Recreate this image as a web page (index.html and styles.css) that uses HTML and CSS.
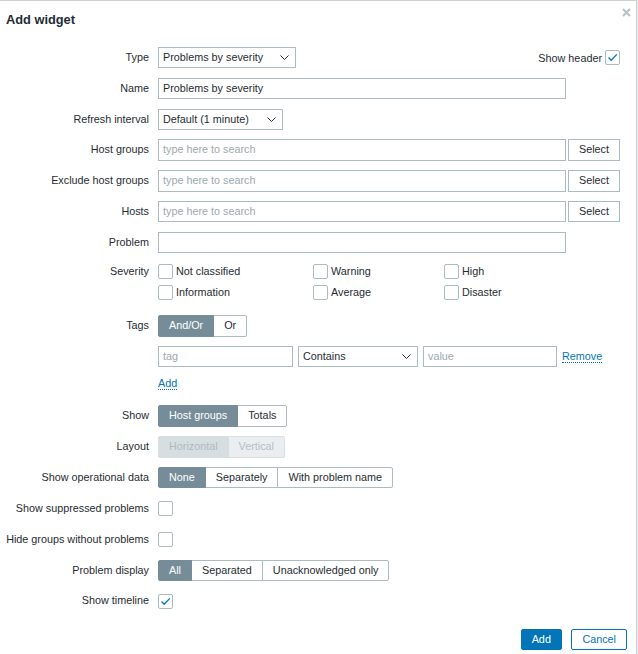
FILE: index.html
```html
<!DOCTYPE html>
<html lang="en">
<head>
<meta charset="utf-8">
<title>Add widget</title>
<link rel="stylesheet" href="styles.css">
</head>
<body>
<div class="dialog">
  <div class="dialog-header">
    <h4 class="title">Add widget</h4>
    <span class="close" title="Close">
      <svg width="9" height="9" viewBox="0 0 9 9"><path d="M1 1L8 8M8 1L1 8" stroke="#b9c3c8" stroke-width="2.2" fill="none"/></svg>
    </span>
  </div>

  <div class="dialog-body">
    <div class="form-grid">
      <div class="lbl">Type</div>
      <div class="field">
        <div class="select w-type"><span>Problems by severity</span><svg class="chev" width="9" height="5" viewBox="0 0 9 5"><path d="M0.5 0.5L4.5 4.5L8.5 0.5" stroke="#1f2c33" stroke-width="1" fill="none"/></svg></div>
        <div class="show-header"><span>Show header</span><span class="cb"><svg width="13" height="13" viewBox="0 0 13 13"><path d="M2.5 6.5L5.2 9.2L10.8 3.4" stroke="#0275b8" stroke-width="1.3" fill="none"/></svg></span></div>
      </div>

      <div class="lbl">Name</div>
      <div class="field"><div class="input w-wide">Problems by severity</div></div>

      <div class="lbl">Refresh interval</div>
      <div class="field">
        <div class="select w-refresh"><span>Default (1 minute)</span><svg class="chev" width="9" height="5" viewBox="0 0 9 5"><path d="M0.5 0.5L4.5 4.5L8.5 0.5" stroke="#1f2c33" stroke-width="1" fill="none"/></svg></div>
      </div>

      <div class="lbl">Host groups</div>
      <div class="field field-ms"><div class="input w-wide placeholder">type here to search</div><div class="btn-select">Select</div></div>

      <div class="lbl">Exclude host groups</div>
      <div class="field field-ms"><div class="input w-wide placeholder">type here to search</div><div class="btn-select">Select</div></div>

      <div class="lbl">Hosts</div>
      <div class="field field-ms"><div class="input w-wide placeholder">type here to search</div><div class="btn-select">Select</div></div>

      <div class="lbl">Problem</div>
      <div class="field"><div class="input w-wide"></div></div>

      <div class="lbl lbl-top">Severity</div>
      <div class="severity">
        <div class="check-item"><span class="cb"></span><span>Not classified</span></div>
        <div class="check-item"><span class="cb"></span><span>Warning</span></div>
        <div class="check-item"><span class="cb"></span><span>High</span></div>
        <div class="check-item"><span class="cb"></span><span>Information</span></div>
        <div class="check-item"><span class="cb"></span><span>Average</span></div>
        <div class="check-item"><span class="cb"></span><span>Disaster</span></div>
      </div>

      <div class="lbl">Tags</div>
      <div class="tags">
        <div class="seg"><span class="on">And/Or</span><span>Or</span></div>
        <div class="tag-row">
          <div class="input w-tag placeholder">tag</div>
          <div class="select w-op"><span>Contains</span><svg class="chev" width="9" height="5" viewBox="0 0 9 5"><path d="M0.5 0.5L4.5 4.5L8.5 0.5" stroke="#1f2c33" stroke-width="1" fill="none"/></svg></div>
          <div class="input w-val placeholder">value</div>
          <a class="link" href="#">Remove</a>
        </div>
        <div class="add-row"><a class="link" href="#">Add</a></div>
      </div>

      <div class="lbl">Show</div>
      <div class="field"><div class="seg"><span class="on">Host groups</span><span>Totals</span></div></div>

      <div class="lbl">Layout</div>
      <div class="field"><div class="seg seg-disabled"><span class="on">Horizontal</span><span>Vertical</span></div></div>

      <div class="lbl">Show operational data</div>
      <div class="field"><div class="seg"><span class="on">None</span><span>Separately</span><span>With problem name</span></div></div>

      <div class="lbl">Show suppressed problems</div>
      <div class="field"><span class="cb"></span></div>

      <div class="lbl">Hide groups without problems</div>
      <div class="field"><span class="cb"></span></div>

      <div class="lbl">Problem display</div>
      <div class="field"><div class="seg"><span class="on">All</span><span>Separated</span><span>Unacknowledged only</span></div></div>

      <div class="lbl">Show timeline</div>
      <div class="field"><span class="cb"><svg width="13" height="13" viewBox="0 0 13 13"><path d="M2.5 6.5L5.2 9.2L10.8 3.4" stroke="#0275b8" stroke-width="1.3" fill="none"/></svg></span></div>
    </div>
  </div>

  <div class="dialog-footer">
    <button class="btn btn-primary" type="button">Add</button>
    <button class="btn btn-alt" type="button">Cancel</button>
  </div>
</div>
</body>
</html>
```

FILE: styles.css
```css
* { box-sizing: border-box; }

html, body {
  margin: 0;
  padding: 0;
}

body {
  background: #e9ecee;
  font-family: "Liberation Sans", Arial, sans-serif;
  font-size: 10.8px;
  color: #1f2c33;
}

.dialog {
  width: 637px;
  height: 654px;
  background: #ffffff;
  border-top: 1px solid #c9d1d5;
  border-right: 1px solid #c9d1d5;
}

.dialog-header {
  display: flex;
  justify-content: space-between;
  align-items: flex-start;
  height: 35px;
  padding: 10px 5px 0 6px;
}

.title {
  margin: 0;
  font-size: 12.8px;
  font-weight: bold;
  line-height: 17px;
  color: #1f2c33;
}

.close {
  display: block;
  width: 9px;
  height: 9px;
  margin-top: -3px;
}
.close svg { display: block; }

.dialog-body {
  padding-top: 11px;
}

.form-grid {
  display: grid;
  grid-template-columns: 149px 462px;
  column-gap: 9px;
  row-gap: 9.5px;
}

.lbl {
  text-align: right;
  line-height: 21.33px;
  white-space: nowrap;
}
.lbl-top { line-height: 17px; }

.field {
  display: flex;
  align-items: center;
  min-height: 21.33px;
}

.input, .select, .btn-select {
  height: 21.33px;
  line-height: 19.33px;
  border: 1px solid #acbbc2;
  background: #fff;
  padding: 0 4px;
  white-space: nowrap;
  overflow: hidden;
}

.placeholder { color: #9ea8ad; }

.select {
  display: flex;
  align-items: center;
  justify-content: space-between;
  padding-right: 6px;
}
.chev { display: block; flex: none; }

.w-type { width: 138px; }
.w-refresh { width: 125px; }
.w-wide { width: 408px; }
.w-tag { width: 135px; }
.w-op { width: 120px; }
.w-val { width: 134px; }

.show-header {
  margin-left: auto;
  display: flex;
  align-items: center;
  gap: 3px;
}

.field-ms { gap: 2px; }

.btn-select {
  width: 52px;
  text-align: center;
  padding: 0;
  color: #1f2c33;
}

.cb {
  display: inline-flex;
  align-items: center;
  justify-content: center;
  width: 15px;
  height: 15px;
  border: 1px solid #acbbc2;
  border-radius: 2px;
  background: #fff;
  flex: none;
}
.cb svg { display: block; }

.severity {
  display: grid;
  grid-template-columns: 155px 131px auto;
  grid-auto-rows: 21.5px;
  align-items: start;
}

.check-item {
  display: flex;
  align-items: center;
  gap: 3px;
  padding-top: 1px;
  line-height: 15px;
}

.tags {
  display: flex;
  flex-direction: column;
  align-items: flex-start;
  gap: 9.5px;
}

.tag-row {
  display: flex;
  align-items: center;
  gap: 5px;
}

.add-row {
  line-height: 12px;
  height: 12px;
  margin-bottom: 7px;
}

.link {
  color: #0275b8;
  text-decoration: none;
  border-bottom: 1px dotted #0275b8;
}

.seg {
  display: inline-flex;
}
.seg span {
  height: 21.33px;
  line-height: 19.33px;
  padding: 0 10px;
  border: 1px solid #acbbc2;
  background: #fff;
  color: #1f2c33;
  white-space: nowrap;
}
.seg span + span { margin-left: -1px; }
.seg span:first-child { border-radius: 2px 0 0 2px; }
.seg span:last-child { border-radius: 0 2px 2px 0; }
.seg span.on {
  background: #768d99;
  border-color: #768d99;
  color: #ffffff;
  position: relative;
}

.seg-disabled span {
  background: #ebeef0;
  border-color: #d9dfe2;
  color: #b4bfc4;
}
.seg-disabled span.on {
  background: #d6dee2;
  border-color: #d6dee2;
  color: #aebbc1;
}

.dialog-footer {
  display: flex;
  justify-content: flex-end;
  gap: 9.5px;
  margin-top: 17px;
  padding-right: 9px;
}

.btn {
  height: 21.33px;
  padding: 0 10px;
  font-family: "Liberation Sans", Arial, sans-serif;
  font-size: 10.8px;
  line-height: 19.33px;
  border: 1px solid #0275b8;
  border-radius: 2px;
  cursor: pointer;
}
.btn-primary {
  background: #0275b8;
  color: #ffffff;
}
.btn-alt {
  background: #ffffff;
  color: #0275b8;
}
```
